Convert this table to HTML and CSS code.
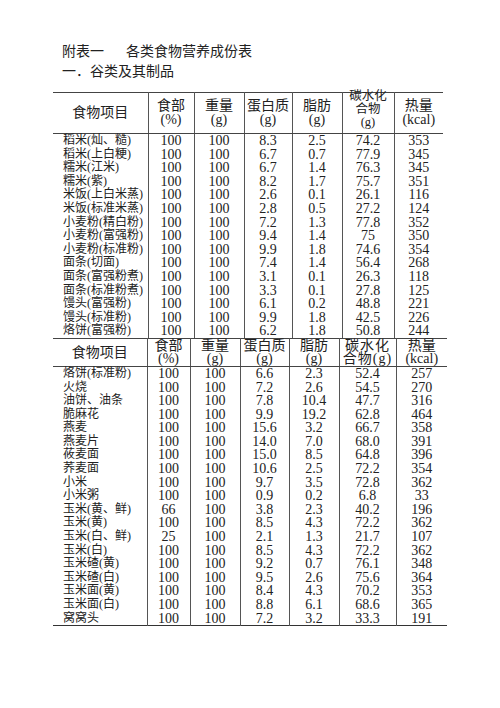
FILE: index.html
```html
<!DOCTYPE html>
<html lang="zh-CN">
<head>
<meta charset="utf-8">
<title>附表一 各类食物营养成份表</title>
<link rel="stylesheet" href="styles.css">
</head>
<body>
<div class="page">
  <div class="titles">
    <div class="title"><span class="t-num">附表一</span><span>各类食物营养成份表</span></div>
    <div class="title">一．谷类及其制品</div>
  </div>

  <table class="tbl tbl1">
    <colgroup>
      <col class="c1a"><col class="c2a"><col class="c3a"><col class="c4a"><col class="c5a"><col class="c6a"><col class="c7a">
    </colgroup>
    <thead>
      <tr class="head1">
        <th class="name-h">食物项目</th>
        <th>食部<br>(%)</th>
        <th>重量<br>(g)</th>
        <th>蛋白质<br>(g)</th>
        <th>脂肪<br>(g)</th>
        <th class="carb1">碳水化<br>合物<br>(g)</th>
        <th>热量<br>(kcal)</th>
      </tr>
    </thead>
    <tbody>
      <tr><td class="nm">稻米(灿、糙)</td><td>100</td><td>100</td><td>8.3</td><td>2.5</td><td>74.2</td><td>353</td></tr>
      <tr><td class="nm">稻米(上白粳)</td><td>100</td><td>100</td><td>6.7</td><td>0.7</td><td>77.9</td><td>345</td></tr>
      <tr><td class="nm">糯米(江米)</td><td>100</td><td>100</td><td>6.7</td><td>1.4</td><td>76.3</td><td>345</td></tr>
      <tr><td class="nm">糯米(紫)</td><td>100</td><td>100</td><td>8.2</td><td>1.7</td><td>75.7</td><td>351</td></tr>
      <tr><td class="nm">米饭(上白米蒸)</td><td>100</td><td>100</td><td>2.6</td><td>0.1</td><td>26.1</td><td>116</td></tr>
      <tr><td class="nm">米饭(标准米蒸)</td><td>100</td><td>100</td><td>2.8</td><td>0.5</td><td>27.2</td><td>124</td></tr>
      <tr><td class="nm">小麦粉(精白粉)</td><td>100</td><td>100</td><td>7.2</td><td>1.3</td><td>77.8</td><td>352</td></tr>
      <tr><td class="nm">小麦粉(富强粉)</td><td>100</td><td>100</td><td>9.4</td><td>1.4</td><td>75</td><td>350</td></tr>
      <tr><td class="nm">小麦粉(标准粉)</td><td>100</td><td>100</td><td>9.9</td><td>1.8</td><td>74.6</td><td>354</td></tr>
      <tr><td class="nm">面条(切面)</td><td>100</td><td>100</td><td>7.4</td><td>1.4</td><td>56.4</td><td>268</td></tr>
      <tr><td class="nm">面条(富强粉煮)</td><td>100</td><td>100</td><td>3.1</td><td>0.1</td><td>26.3</td><td>118</td></tr>
      <tr><td class="nm">面条(标准粉煮)</td><td>100</td><td>100</td><td>3.3</td><td>0.1</td><td>27.8</td><td>125</td></tr>
      <tr><td class="nm">馒头(富强粉)</td><td>100</td><td>100</td><td>6.1</td><td>0.2</td><td>48.8</td><td>221</td></tr>
      <tr><td class="nm">馒头(标准粉)</td><td>100</td><td>100</td><td>9.9</td><td>1.8</td><td>42.5</td><td>226</td></tr>
      <tr><td class="nm">烙饼(富强粉)</td><td>100</td><td>100</td><td>6.2</td><td>1.8</td><td>50.8</td><td>244</td></tr>
    </tbody>
  </table>

  <table class="tbl tbl2">
    <colgroup>
      <col class="c1b"><col class="c2b"><col class="c3b"><col class="c4b"><col class="c5b"><col class="c6b"><col class="c7b">
    </colgroup>
    <thead>
      <tr class="head2">
        <th class="name-h">食物项目</th>
        <th>食部<br>(%)</th>
        <th>重量<br>(g)</th>
        <th>蛋白质<br>(g)</th>
        <th>脂肪<br>(g)</th>
        <th class="carb2">碳水化<br>合物(g)</th>
        <th>热量<br>(kcal)</th>
      </tr>
    </thead>
    <tbody>
      <tr><td class="nm">烙饼(标准粉)</td><td>100</td><td>100</td><td>6.6</td><td>2.3</td><td>52.4</td><td>257</td></tr>
      <tr><td class="nm">火烧</td><td>100</td><td>100</td><td>7.2</td><td>2.6</td><td>54.5</td><td>270</td></tr>
      <tr><td class="nm">油饼、油条</td><td>100</td><td>100</td><td>7.8</td><td>10.4</td><td>47.7</td><td>316</td></tr>
      <tr><td class="nm">脆麻花</td><td>100</td><td>100</td><td>9.9</td><td>19.2</td><td>62.8</td><td>464</td></tr>
      <tr><td class="nm">燕麦</td><td>100</td><td>100</td><td>15.6</td><td>3.2</td><td>66.7</td><td>358</td></tr>
      <tr><td class="nm">燕麦片</td><td>100</td><td>100</td><td>14.0</td><td>7.0</td><td>68.0</td><td>391</td></tr>
      <tr><td class="nm">莜麦面</td><td>100</td><td>100</td><td>15.0</td><td>8.5</td><td>64.8</td><td>396</td></tr>
      <tr><td class="nm">荞麦面</td><td>100</td><td>100</td><td>10.6</td><td>2.5</td><td>72.2</td><td>354</td></tr>
      <tr><td class="nm">小米</td><td>100</td><td>100</td><td>9.7</td><td>3.5</td><td>72.8</td><td>362</td></tr>
      <tr><td class="nm">小米粥</td><td>100</td><td>100</td><td>0.9</td><td>0.2</td><td>6.8</td><td>33</td></tr>
      <tr><td class="nm">玉米(黄、鲜)</td><td>66</td><td>100</td><td>3.8</td><td>2.3</td><td>40.2</td><td>196</td></tr>
      <tr><td class="nm">玉米(黄)</td><td>100</td><td>100</td><td>8.5</td><td>4.3</td><td>72.2</td><td>362</td></tr>
      <tr><td class="nm">玉米(白、鲜)</td><td>25</td><td>100</td><td>2.1</td><td>1.3</td><td>21.7</td><td>107</td></tr>
      <tr><td class="nm">玉米(白)</td><td>100</td><td>100</td><td>8.5</td><td>4.3</td><td>72.2</td><td>362</td></tr>
      <tr><td class="nm">玉米碴(黄)</td><td>100</td><td>100</td><td>9.2</td><td>0.7</td><td>76.1</td><td>348</td></tr>
      <tr><td class="nm">玉米碴(白)</td><td>100</td><td>100</td><td>9.5</td><td>2.6</td><td>75.6</td><td>364</td></tr>
      <tr><td class="nm">玉米面(黄)</td><td>100</td><td>100</td><td>8.4</td><td>4.3</td><td>70.2</td><td>353</td></tr>
      <tr><td class="nm">玉米面(白)</td><td>100</td><td>100</td><td>8.8</td><td>6.1</td><td>68.6</td><td>365</td></tr>
      <tr><td class="nm">窝窝头</td><td>100</td><td>100</td><td>7.2</td><td>3.2</td><td>33.3</td><td>191</td></tr>
    </tbody>
  </table>
</div>
</body>
</html>
```

FILE: styles.css
```css
html, body {
  margin: 0;
  padding: 0;
  background: #ffffff;
}

body {
  font-family: "Liberation Serif", "Noto Sans CJK SC", serif;
  color: #222222;
}

.page {
  padding: 42px 0 0 53px;
}

.titles {
  padding-left: 9px;
  margin-bottom: 10px;
}

.title {
  font-size: 14px;
  line-height: 20px;
  height: 20px;
  white-space: nowrap;
}

.t-num {
  display: inline-block;
  width: 64px;
}

.tbl {
  border-collapse: collapse;
  table-layout: fixed;
  font-size: 14px;
}

.tbl1 { width: 390px; border-top: 1px solid #444; }
.tbl2 { width: 394px; border-top: 1px solid #444; border-bottom: 1px solid #333; }

.c1a { width: 95px; }
.c2a { width: 46px; }
.c3a { width: 50px; }
.c4a { width: 48px; }
.c5a { width: 50px; }
.c6a { width: 52px; }
.c7a { width: 49px; }

.c1b { width: 94px; }
.c2b { width: 43px; }
.c3b { width: 50px; }
.c4b { width: 49px; }
.c5b { width: 50px; }
.c6b { width: 57px; }
.c7b { width: 51px; }

.tbl th,
.tbl td {
  padding: 0;
  text-align: center;
  border-left: 1px solid #555;
  font-weight: normal;
  white-space: nowrap;
  overflow: visible;
}

.tbl th:first-child,
.tbl td:first-child {
  border-left: none;
}

.tbl thead th {
  font-size: 14px;
  line-height: 13.5px;
  border-bottom: 1px solid #444;
  vertical-align: middle;
}

.head1 { height: 41px; }
.head2 { height: 27px; }

.head1 th { padding-bottom: 1px; }

.tbl thead th.carb1 {
  font-size: 12.5px;
  line-height: 13px;
  position: relative;
  top: -3px;
}

.tbl2 .carb2 { letter-spacing: 1px; }

.tbl tbody td {
  line-height: 13.6px;
  height: 13.6px;
}

.tbl td.nm {
  text-align: left;
  padding-left: 10px;
  font-size: 12px;
}
```
